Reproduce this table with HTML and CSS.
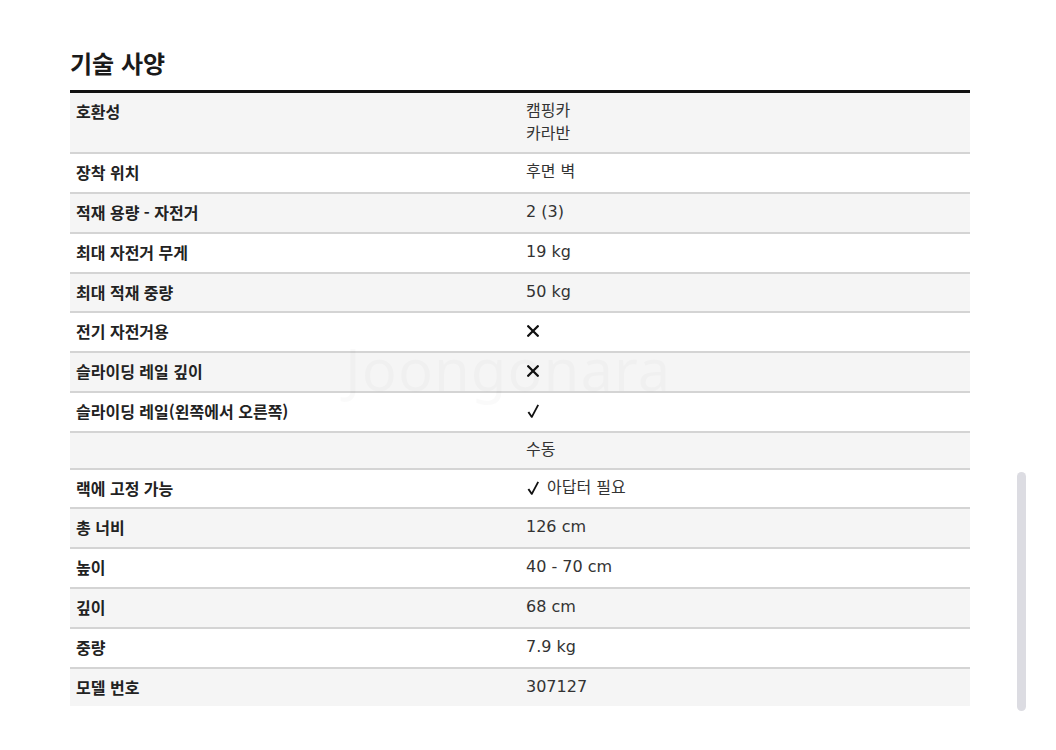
FILE: index.html
```html
<!DOCTYPE html>
<html lang="ko">
<head>
<meta charset="utf-8">
<title>기술 사양</title>
<link rel="stylesheet" href="styles.css">
</head>
<body>
<main class="page">
  <section class="specs">
    <h2 class="specs-title">기술 사양</h2>
    <table class="spec-table">
      <tbody>
        <tr class="alt first"><th>호환성</th><td>캠핑카<br>카라반</td></tr>
        <tr><th>장착 위치</th><td>후면 벽</td></tr>
        <tr class="alt"><th>적재 용량 - 자전거</th><td>2 (3)</td></tr>
        <tr><th>최대 자전거 무게</th><td>19 kg</td></tr>
        <tr class="alt"><th>최대 적재 중량</th><td>50 kg</td></tr>
        <tr><th>전기 자전거용</th><td><svg class="mark" width="12" height="12" viewBox="0 0 12 12" aria-label="아니요"><path d="M1.2 1.2 L10.8 10.8 M10.8 1.2 L1.2 10.8" stroke="#111" stroke-width="2.3" stroke-linecap="round" fill="none"/></svg></td></tr>
        <tr class="alt"><th>슬라이딩 레일 깊이</th><td><svg class="mark" width="12" height="12" viewBox="0 0 12 12" aria-label="아니요"><path d="M1.2 1.2 L10.8 10.8 M10.8 1.2 L1.2 10.8" stroke="#111" stroke-width="2.3" stroke-linecap="round" fill="none"/></svg></td></tr>
        <tr><th>슬라이딩 레일(왼쪽에서 오른쪽)</th><td><svg class="mark check" width="12" height="14" viewBox="0 0 12 14" aria-label="예"><path d="M0.6 8.6 L2.2 7.6 L4.7 11.2 L10.4 0.4 L12 1.2 L5.4 13.8 L4.2 13.8 Z" fill="#111"/></svg></td></tr>
        <tr class="alt compact"><th></th><td>수동</td></tr>
        <tr><th>랙에 고정 가능</th><td><svg class="mark check gap" width="12" height="14" viewBox="0 0 12 14" aria-label="예"><path d="M0.6 8.6 L2.2 7.6 L4.7 11.2 L10.4 0.4 L12 1.2 L5.4 13.8 L4.2 13.8 Z" fill="#111"/></svg> 아답터 필요</td></tr>
        <tr class="alt"><th>총 너비</th><td>126 cm</td></tr>
        <tr><th>높이</th><td>40 - 70 cm</td></tr>
        <tr class="alt"><th>깊이</th><td>68 cm</td></tr>
        <tr><th>중량</th><td>7.9 kg</td></tr>
        <tr class="alt"><th>모델 번호</th><td>307127</td></tr>
      </tbody>
    </table>
  </section>
  <div class="watermark">Joongonara</div>
  <div class="scrollbar"></div>
</main>
</body>
</html>
```
FILE: styles.css
```css
html, body {
  margin: 0;
  padding: 0;
  background: #ffffff;
}

.page {
  position: relative;
  width: 1056px;
  height: 750px;
  overflow: hidden;
  padding: 45px 0 0 70px;
  box-sizing: border-box;
}

.specs {
  width: 900px;
}

.specs-title {
  margin: 0 0 10px 0;
  font-family: "Noto Sans CJK KR", sans-serif;
  font-size: 24px;
  font-weight: 700;
  line-height: 35px;
  color: #1a1a1a;
}

.spec-table {
  width: 900px;
  border-collapse: collapse;
  border-top: 3px solid #111111;
  table-layout: fixed;
}

.spec-table tr {
  border-bottom: 2px solid #d4d4d4;
}

.spec-table tr:last-child {
  border-bottom: none;
}

.spec-table tr.alt {
  background: #f5f5f5;
}

.spec-table th,
.spec-table td {
  width: 50%;
  padding: 7px 6px 8px 6px;
  text-align: left;
  vertical-align: top;
  font-size: 16px;
  line-height: 22.78px;
}

.spec-table tr.first th,
.spec-table tr.first td {
  padding-bottom: 7px;
  line-height: 22.6px;
}

.spec-table th {
  font-family: "Noto Sans CJK KR", sans-serif;
  font-weight: 700;
  color: #222222;
}

.spec-table td {
  font-family: "DejaVu Sans", "Noto Sans CJK KR", sans-serif;
  font-weight: 400;
  color: #333333;
}

.spec-table tr.compact th,
.spec-table tr.compact td {
  line-height: 20px;
}

.mark {
  display: inline-block;
  vertical-align: -1px;
  margin-left: 1px;
}

.mark.check {
  vertical-align: -2px;
}

.mark.gap {
  margin-right: 3px;
}

.watermark {
  position: absolute;
  left: 345px;
  top: 334px;
  font-family: "Noto Sans", sans-serif;
  font-size: 58px;
  line-height: 70px;
  letter-spacing: 1px;
  color: rgba(0, 0, 0, 0.018);
  pointer-events: none;
}

.scrollbar {
  position: absolute;
  left: 1017px;
  top: 472px;
  width: 9px;
  height: 239px;
  border-radius: 5px;
  background: #dcdce2;
}
```
